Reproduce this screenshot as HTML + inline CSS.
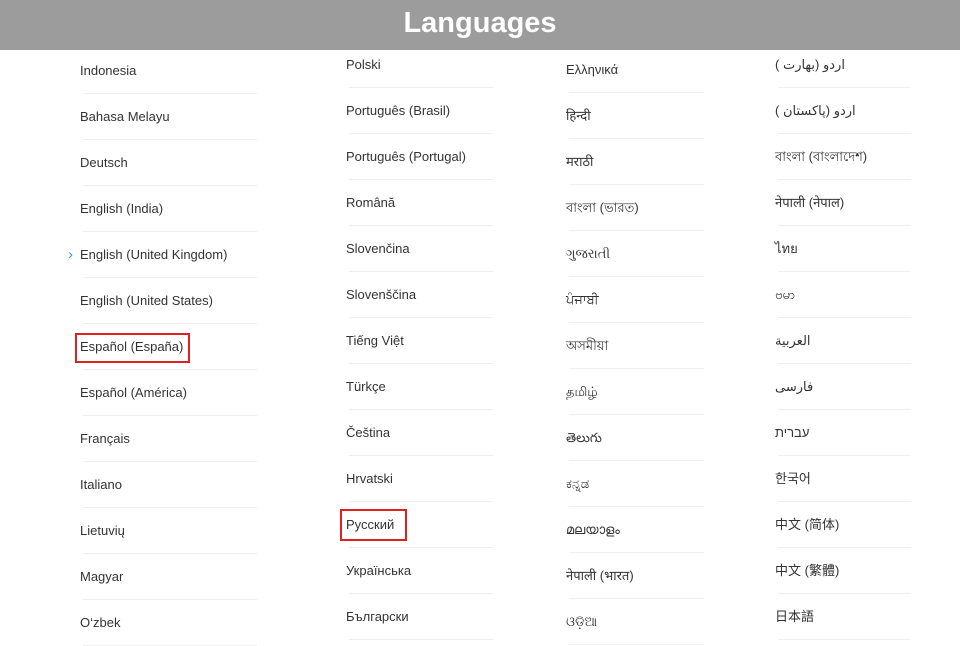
<!DOCTYPE html>
<html><head><meta charset="utf-8"><style>
*{margin:0;padding:0;box-sizing:border-box}
body{width:960px;height:640px;overflow:hidden;background:#fff;font-family:"Liberation Sans","DejaVu Sans","Noto Sans CJK SC",sans-serif;color:#333;position:relative}
.hd{position:absolute;left:0;top:0;width:960px;height:50px;background:#9c9c9c;color:#fff;font-weight:bold;font-size:29px;text-align:center;line-height:46px;z-index:5}
.col{position:absolute}
.col div{height:46px;line-height:46px;font-size:13px;white-space:nowrap;position:relative}
.col div::after{content:"";position:absolute;left:3px;right:0;bottom:0;height:1px;background:#efefef}
.box{position:absolute;border:2px solid #e02020}
.chev{position:absolute;left:68px;top:246px;color:#3a9ad9;font-size:15px}
</style></head><body>
<div class="hd">Languages</div>
<div class="col" style="left:80px;top:48px;width:177px">
<div>Indonesia</div><div>Bahasa Melayu</div><div>Deutsch</div><div>English (India)</div><div>English (United Kingdom)</div><div>English (United States)</div><div>Español (España)</div><div>Español (América)</div><div>Français</div><div>Italiano</div><div>Lietuvių</div><div>Magyar</div><div>O‘zbek</div></div>
<div class="col" style="left:346px;top:42px;width:147px">
<div>Polski</div><div>Português (Brasil)</div><div>Português (Portugal)</div><div>Română</div><div>Slovenčina</div><div>Slovenščina</div><div>Tiếng Việt</div><div>Türkçe</div><div>Čeština</div><div>Hrvatski</div><div>Русский</div><div>Українська</div><div>Български</div></div>
<div class="col" style="left:566px;top:47px;width:138px">
<div>Ελληνικά</div><div>हिन्दी</div><div>मराठी</div><div>বাংলা (ভারত)</div><div>ગુજરાતી</div><div>ਪੰਜਾਬੀ</div><div>অসমীয়া</div><div>தமிழ்</div><div>తెలుగు</div><div>ಕನ್ನಡ</div><div>മലയാളം</div><div>नेपाली (भारत)</div><div>ଓଡ଼ିଆ</div></div>
<div class="col" style="left:775px;top:42px;width:136px">
<div>( اردو (بھارت</div><div>( اردو (پاکستان</div><div>বাংলা (বাংলাদেশ)</div><div>नेपाली (नेपाल)</div><div>ไทย</div><div>ဗမာ</div><div>العربية</div><div>فارسی</div><div>עברית</div><div>한국어</div><div>中文 (简体)</div><div>中文 (繁體)</div><div>日本語</div></div>
<div class="chev">›</div>
<div class="box" style="left:75px;top:333px;width:115px;height:30px"></div>
<div class="box" style="left:340px;top:509px;width:67px;height:32px"></div>
</body></html>
